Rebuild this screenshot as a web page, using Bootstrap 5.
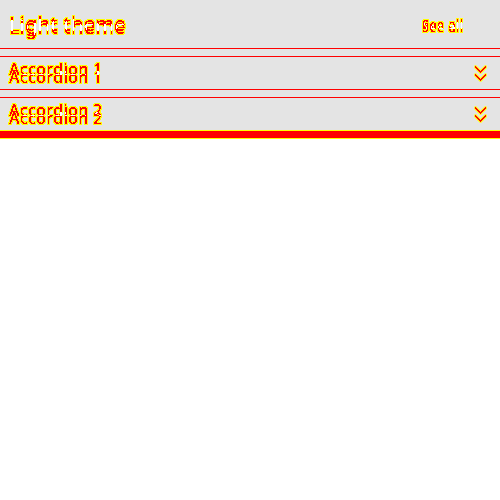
<!DOCTYPE html>
<html lang="en"><head><meta charset="utf-8"><title>Light theme</title>
<link href="https://cdn.jsdelivr.net/npm/bootstrap@5.3.0/dist/css/bootstrap.min.css" rel="stylesheet">
<script src="https://cdn.jsdelivr.net/npm/bootstrap@5.3.0/dist/js/bootstrap.bundle.min.js"></script>
<style>
body{font-family:"Noto Sans",sans-serif;background:#fff}
.panel{background:#e4e4e4;height:130px}
.head{height:48px;padding:1px 36px 0 9px}
.title{font-size:20px;font-weight:400;letter-spacing:.3px;line-height:46px;color:#000;filter:url(#diff3)}
.all{font-size:12px;font-weight:600;letter-spacing:.6px;line-height:48px;color:#000;filter:url(#diff3)}
.rule{height:9px;border-top:1px solid red;border-bottom:1px solid red}
.rowline{height:32px;padding:0 13px 0 9px}
.label{font-size:16px;font-weight:500;letter-spacing:.35px;line-height:24px;color:#000;filter:url(#diff8)}
.chev{margin-top:8px}
.foot{height:9px;background:red;border-top:1px solid #ff0;border-bottom:1px solid #ff0}
</style></head><body>
<svg width="0" height="0" class="position-absolute"><defs>
<filter id="diff8" x="-10" y="-10" width="200" height="70" filterUnits="userSpaceOnUse" color-interpolation-filters="sRGB"><feComponentTransfer result="a"><feFuncA type="discrete" tableValues="0 1"/></feComponentTransfer><feOffset dy="8" result="b"/><feComposite in="a" in2="b" operator="xor" result="x"/><feMorphology in="x" operator="dilate" radius="1" result="d"/><feFlood flood-color="#ff0"/><feComposite in2="d" operator="in" result="y"/><feFlood flood-color="red"/><feComposite in2="x" operator="in" result="r"/><feComposite in="a" in2="b" operator="in" result="i"/><feFlood flood-color="#fff"/><feComposite in2="i" operator="in" result="w"/><feMerge><feMergeNode in="y"/><feMergeNode in="w"/><feMergeNode in="r"/></feMerge></filter>
<filter id="diff3" x="-10" y="-10" width="200" height="70" filterUnits="userSpaceOnUse" color-interpolation-filters="sRGB"><feComponentTransfer result="a"><feFuncA type="discrete" tableValues="0 1"/></feComponentTransfer><feOffset dy="3" result="b"/><feComposite in="a" in2="b" operator="xor" result="x"/><feMorphology in="x" operator="dilate" radius="1" result="d"/><feFlood flood-color="#ff0"/><feComposite in2="d" operator="in" result="y"/><feFlood flood-color="red"/><feComposite in2="x" operator="in" result="r"/><feComposite in="a" in2="b" operator="in" result="i"/><feFlood flood-color="#fff"/><feComposite in2="i" operator="in" result="w"/><feMerge><feMergeNode in="y"/><feMergeNode in="w"/><feMergeNode in="r"/></feMerge></filter>
<path id="step" d="M1 1h1v1h1v1h1v1h1v1h1v1h1v-1h1v-1h1v-1h1v-1h1v-1h1v2h-1v1h-1v1h-1v1h-1v1h-1v1h-1v-1h-1v-1h-1v-1h-1v-1h-1v-1h-1z"/>
<g id="chevrons" stroke-linejoin="round"><use href="#step" fill="#ff0" stroke="#ff0" stroke-width="1.6"/><use href="#step" y="8" fill="#ff0" stroke="#ff0" stroke-width="1.6"/><use href="#step" fill="red"/><use href="#step" y="8" fill="red"/></g>
</defs></svg>
<main class="panel">
<header class="head d-flex justify-content-between"><div class="title">Light theme</div><div class="all">See all</div></header>
<div class="rule"></div>
<div class="rowline d-flex justify-content-between"><div class="label">Accordion 1</div><svg class="chev" width="13" height="18"><use href="#chevrons"/></svg></div>
<div class="rule"></div>
<div class="rowline d-flex justify-content-between"><div class="label">Accordion 2</div><svg class="chev" width="13" height="18"><use href="#chevrons"/></svg></div>
</main><div class="foot"></div>
</body></html>
